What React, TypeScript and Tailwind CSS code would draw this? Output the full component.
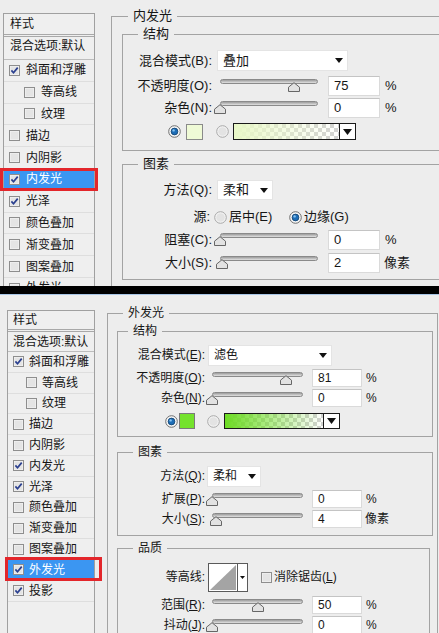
import React from "react";

const font = "font-['Liberation_Sans','Noto_Sans_CJK_SC',sans-serif]";

const layers: [string, boolean][] = [
  ["斜面和浮雕", false],
  ["等高线", true],
  ["纹理", true],
  ["描边", false],
  ["内阴影", false],
  ["内发光", false],
  ["光泽", false],
  ["颜色叠加", false],
  ["渐变叠加", false],
  ["图案叠加", false],
  ["外发光", false],
  ["投影", false],
];

function CheckBox({ checked }: { checked?: boolean }) {
  return (
    <svg width="11" height="11" viewBox="0 0 11 11" className="shrink-0">
      <rect x="0.5" y="0.5" width="10" height="10" fill="#f6f6f6" stroke="#8e8e8e" />
      <rect x="1.5" y="1.5" width="8" height="8" fill="#e4e4e4" />
      {checked && (
        <path d="M2.4 5.4 4.5 7.8 8.7 2.6" fill="none" stroke="#2a3f8f" strokeWidth="1.7" />
      )}
    </svg>
  );
}

function Radio({ on }: { on?: boolean }) {
  return (
    <svg width="13" height="13" viewBox="0 0 13 13" className="shrink-0">
      <circle cx="6.5" cy="6.5" r="5.8" fill="#f4f4f4" stroke={on ? "#707070" : "#a8a8a8"} />
      <circle cx="6.5" cy="6.5" r="4.3" fill={on ? "#ffffff" : "#e3e3e3"} />
      {on && (
        <>
          <circle cx="6.5" cy="6.5" r="3.4" fill="#1d6db6" stroke="#0f3d69" strokeWidth="0.8" />
          <circle cx="5.6" cy="5.4" r="1.2" fill="#86c4f2" />
        </>
      )}
    </svg>
  );
}

function Tri() {
  return (
    <svg width="8" height="5" viewBox="0 0 8 5" className="shrink-0">
      <path d="M0 0H8L4 5Z" fill="#111" />
    </svg>
  );
}

function Thumb() {
  return (
    <svg width="12" height="10" viewBox="0 0 12 10">
      <path d="M0.5 9.5V5.2L6 0.7L11.5 5.2V9.5Z" fill="#e2e2e2" stroke="#666" />
    </svg>
  );
}

function Slider({ cls, w, p }: { cls: string; w: number; p: number }) {
  return (
    <div className={`relative h-full shrink-0 ${cls}`}>
      <div className="absolute left-0 right-0 top-[3px] h-[5px] rounded-full border border-[#8a8a8a] bg-gradient-to-b from-[#9c9c9c] to-[#e2e2e2]" />
      <div className="absolute top-[6px] flex" style={{ left: p * w - 6 }}>
        <Thumb />
      </div>
    </div>
  );
}

function Field({ v, cls }: { v: string; cls: string }) {
  return (
    <div className={`flex h-full shrink-0 items-center border border-[#dadada] border-t-[#c4c4c4] bg-white pl-[5px] ${cls}`}>
      {v}
    </div>
  );
}

function Select({ v, cls }: { v: string; cls: string }) {
  return (
    <div className={`flex h-full shrink-0 items-center justify-between border border-[#e4e4e4] bg-white pl-[5px] pr-[4px] ${cls}`}>
      <span>{v}</span>
      <Tri />
    </div>
  );
}

function GradientBox({ id, color, cls }: { id: string; color: string; cls: string }) {
  return (
    <div className={`flex h-full shrink-0 border border-[#1a1a1a] ${cls}`}>
      <svg className="h-full flex-1" preserveAspectRatio="none">
        <defs>
          <pattern id={`${id}p`} width="8" height="8" patternUnits="userSpaceOnUse">
            <rect width="8" height="8" fill="#fff" />
            <rect width="4" height="4" fill="#d2d2d2" />
            <rect x="4" y="4" width="4" height="4" fill="#d2d2d2" />
          </pattern>
          <linearGradient id={`${id}g`} x1="0" x2="1" y1="0" y2="0">
            <stop offset="0" stopColor={color} stopOpacity="1" />
            <stop offset="1" stopColor={color} stopOpacity="0" />
          </linearGradient>
        </defs>
        <rect width="100%" height="100%" fill={`url(#${id}p)`} />
        <rect width="100%" height="100%" fill={`url(#${id}g)`} />
      </svg>
      <div className="flex w-[16px] items-center justify-center border-l border-[#1a1a1a] bg-white">
        <svg width="9" height="6" viewBox="0 0 9 6">
          <path d="M0 0H9L4.5 6Z" fill="#111" />
        </svg>
      </div>
    </div>
  );
}

// mnemonic key, e.g. (B):
function Key({ k, u, bare }: { k: string; u?: boolean; bare?: boolean }) {
  return (
    <>
      (<span className={u ? "underline underline-offset-1" : ""}>{k}</span>){bare ? "" : ":"}
    </>
  );
}

function StyleList({ bottom }: { bottom?: boolean }) {
  const checked = bottom
    ? ["斜面和浮雕", "内发光", "光泽", "外发光", "投影"]
    : ["斜面和浮雕", "内发光", "光泽"];
  const selected = bottom ? "外发光" : "内发光";
  // the top shot is cropped just below 外发光
  const rows = bottom ? layers : layers.slice(0, 11);
  return (
    <div
      className={
        bottom
          ? "ml-[7px] mt-[15px] h-[400px] w-[88px] shrink-0 border border-[#a0a0a0] bg-[#efefef] text-[12px] leading-[14px]"
          : "ml-[3px] mt-[13px] h-[300px] w-[92px] shrink-0 border border-[#a0a0a0] bg-[#efefef] text-[12px] leading-[14px]"
      }
    >
      <div
        className={
          bottom
            ? "flex h-[21px] items-center border-b-[3px] border-double border-[#a8a8a8] pl-[5px]"
            : "flex h-[23px] items-center border-b-[3px] border-double border-[#a8a8a8] pl-[6px]"
        }
      >
        样式
      </div>
      <div
        className={
          bottom
            ? "flex h-[20px] items-center border-b border-[#bdbdbd] pl-[5px]"
            : "flex h-[23px] items-center border-b border-[#bdbdbd] pb-[4px] pl-[6px]"
        }
      >
        混合选项:默认
      </div>
      {rows.map(([name, indent]) => {
        const sel = name === selected;
        return (
          <div
            key={name}
            className={`relative flex items-center border-b border-[#dedede] ${
              bottom ? "h-[20.8px] gap-[5px]" : "h-[21.8px] gap-[6px]"
            } ${indent ? (bottom ? "pl-[18px]" : "pl-[20px]") : "pl-[5px]"} ${
              sel ? "bg-[#3b96f2] text-white" : "text-[#151515]"
            }`}
          >
            <CheckBox checked={checked.includes(name)} />
            <span>{name}</span>
            {sel && (
              <span
                className={
                  bottom
                    ? "absolute -bottom-[1px] -left-[3px] -right-[8px] -top-[3px] border-[3px] border-[#e3262b]"
                    : "absolute -bottom-[1px] -left-[4px] -right-[4px] -top-[1px] border-[3px] border-[#e3262b]"
                }
              />
            )}
          </div>
        );
      })}
    </div>
  );
}

function TopShot() {
  return (
    <div className="flex h-[286px] overflow-hidden bg-[#ededed] text-[#161616]">
      <StyleList />
      <fieldset className="ml-[16px] mt-[8px] w-[360px] shrink-0 self-start border border-[#a3a3a3] pb-[20px] text-[13px] leading-[16px]">
        <legend className="ml-[16px] px-[5px]">内发光</legend>
        <fieldset className="ml-[10px] mt-[2px] w-[340px] border border-[#a3a3a3] pb-[10px]">
          <legend className="ml-[15px] px-[5px]">结构</legend>
          <div className="mt-[8px] flex h-[21px] items-center">
            <div className="w-[89px] whitespace-nowrap text-right">
              混合模式<Key k="B" />
            </div>
            <Select v="叠加" cls="ml-[5px] w-[131px]" />
          </div>
          <div className="mt-[5px] flex h-[20px] items-center">
            <div className="w-[89px] whitespace-nowrap text-right">
              不透明度<Key k="O" />
            </div>
            <Slider cls="ml-[8px] w-[98px]" w={98} p={0.75} />
            <Field v="75" cls="ml-[10px] w-[52px]" />
            <span className="ml-[5px]">%</span>
          </div>
          <div className="mt-[2px] flex h-[20px] items-center">
            <div className="w-[89px] whitespace-nowrap text-right">
              杂色<Key k="N" />
            </div>
            <Slider cls="ml-[8px] w-[98px]" w={98} p={0} />
            <Field v="0" cls="ml-[10px] w-[52px]" />
            <span className="ml-[5px]">%</span>
          </div>
          <div className="mt-[5px] flex h-[17px] items-center pl-[45px]">
            <Radio on />
            <div className="ml-[5px] h-[16px] w-[17px] border border-[#8a8a8a] bg-[#effad6]" />
            <div className="ml-[13px] flex">
              <Radio />
            </div>
            <GradientBox id="ga" color="#e9f8c8" cls="ml-[4px] w-[123px]" />
          </div>
        </fieldset>
        <fieldset className="ml-[10px] mt-[5px] w-[340px] border border-[#a3a3a3] pb-[6px]">
          <legend className="ml-[15px] px-[5px]">图素</legend>
          <div className="mt-[8px] flex h-[20px] items-center">
            <div className="w-[89px] whitespace-nowrap text-right">
              方法<Key k="Q" />
            </div>
            <Select v="柔和" cls="ml-[5px] w-[56px]" />
          </div>
          <div className="mt-[7px] flex h-[20px] items-center">
            <div className="w-[87px] whitespace-nowrap text-right">源:</div>
            <div className="ml-[4px] flex w-[75px] items-center gap-[2px]">
              <Radio />
              <span>居中(E)</span>
            </div>
            <div className="flex items-center gap-[2px]">
              <Radio on />
              <span>边缘(G)</span>
            </div>
          </div>
          <div className="mt-[3px] flex h-[20px] items-center">
            <div className="w-[89px] whitespace-nowrap text-right">
              阻塞<Key k="C" />
            </div>
            <Slider cls="ml-[8px] w-[98px]" w={98} p={0} />
            <Field v="0" cls="ml-[10px] w-[52px]" />
            <span className="ml-[5px]">%</span>
          </div>
          <div className="mt-[3px] flex h-[20px] items-center">
            <div className="w-[89px] whitespace-nowrap text-right">
              大小<Key k="S" />
            </div>
            <Slider cls="ml-[8px] w-[98px]" w={98} p={0.02} />
            <Field v="2" cls="ml-[10px] w-[52px]" />
            <span className="ml-[4px]">像素</span>
          </div>
        </fieldset>
      </fieldset>
    </div>
  );
}

function ContourBox() {
  return (
    <svg width="40" height="29" viewBox="0 0 40 29" className="ml-[3px] shrink-0">
      <rect x="0.5" y="0.5" width="39" height="28" fill="#fff" stroke="#5a5a5a" />
      <path d="M2 27 L28 2 V27 Z" fill="#a4a4a4" />
      <line x1="29.5" y1="1" x2="29.5" y2="28" stroke="#5a5a5a" />
      <path d="M32 13H37L34.5 16Z" fill="#111" />
    </svg>
  );
}

function BottomShot() {
  return (
    <div className="flex h-[338px] overflow-hidden bg-[#ededed] text-[#161616]">
      <StyleList bottom />
      <fieldset className="ml-[12px] mt-[11px] w-[331px] shrink-0 self-start border border-[#a3a3a3] pb-[20px] text-[12px] leading-[15px]">
        <legend className="ml-[15px] px-[5px]">外发光</legend>
        <fieldset className="ml-[9px] mt-[3px] w-[316px] border border-[#a3a3a3] pb-[7px]">
          <legend className="ml-[10px] px-[5px]">结构</legend>
          <div className="mt-[6px] flex h-[21px] items-center">
            <div className="w-[87px] whitespace-nowrap text-right">
              混合模式<Key k="E" u />
            </div>
            <Select v="滤色" cls="ml-[3px] w-[124px]" />
          </div>
          <div className="mt-[3px] flex h-[18px] items-center">
            <div className="w-[87px] whitespace-nowrap text-right">
              不透明度<Key k="O" u />
            </div>
            <Slider cls="ml-[7px] w-[91px]" w={91} p={0.81} />
            <Field v="81" cls="ml-[9px] w-[50px]" />
            <span className="ml-[4px]">%</span>
          </div>
          <div className="mt-[2px] flex h-[18px] items-center">
            <div className="w-[87px] whitespace-nowrap text-right">
              杂色<Key k="N" u />
            </div>
            <Slider cls="ml-[7px] w-[91px]" w={91} p={0} />
            <Field v="0" cls="ml-[9px] w-[50px]" />
            <span className="ml-[4px]">%</span>
          </div>
          <div className="mt-[6px] flex h-[16px] items-center pl-[47px]">
            <Radio on />
            <div className="ml-[1px] h-[16px] w-[16px] border border-[#7a7a7a] bg-[#74e22c]" />
            <div className="ml-[12px] flex">
              <Radio />
            </div>
            <GradientBox id="gb" color="#6ddc24" cls="ml-[4px] w-[116px]" />
          </div>
        </fieldset>
        <fieldset className="ml-[9px] mt-[8px] w-[316px] border border-[#a3a3a3] pb-[7px]">
          <legend className="ml-[15px] px-[5px]">图素</legend>
          <div className="mt-[6px] flex h-[21px] items-center">
            <div className="w-[87px] whitespace-nowrap text-right">
              方法<Key k="Q" u />
            </div>
            <Select v="柔和" cls="ml-[2px] w-[54px]" />
          </div>
          <div className="mt-[3px] flex h-[18px] items-center">
            <div className="w-[87px] whitespace-nowrap text-right">
              扩展<Key k="P" u />
            </div>
            <Slider cls="ml-[7px] w-[91px]" w={91} p={0} />
            <Field v="0" cls="ml-[9px] w-[50px]" />
            <span className="ml-[4px]">%</span>
          </div>
          <div className="mt-[2px] flex h-[18px] items-center">
            <div className="w-[87px] whitespace-nowrap text-right">
              大小<Key k="S" u />
            </div>
            <Slider cls="ml-[7px] w-[91px]" w={91} p={0.04} />
            <Field v="4" cls="ml-[9px] w-[50px]" />
            <span className="ml-[3px]">像素</span>
          </div>
        </fieldset>
        <fieldset className="ml-[9px] mt-[5px] w-[313px] border border-[#a3a3a3] pb-[20px]">
          <legend className="ml-[15px] px-[5px]">品质</legend>
          <div className="mt-[7px] flex h-[28px] items-center">
            <div className="w-[87px] whitespace-nowrap text-right">等高线:</div>
            <ContourBox />
            <div className="ml-[13px] flex items-center gap-[2px]">
              <CheckBox />
              <span>
                消除锯齿<Key k="L" u bare />
              </span>
            </div>
          </div>
          <div className="mt-[5px] flex h-[18px] items-center">
            <div className="w-[87px] whitespace-nowrap text-right">
              范围<Key k="R" u />
            </div>
            <Slider cls="ml-[7px] w-[91px]" w={91} p={0.5} />
            <Field v="50" cls="ml-[9px] w-[50px]" />
            <span className="ml-[4px]">%</span>
          </div>
          <div className="mt-[2px] flex h-[18px] items-center">
            <div className="w-[87px] whitespace-nowrap text-right">
              抖动<Key k="J" u />
            </div>
            <Slider cls="ml-[7px] w-[91px]" w={91} p={0} />
            <Field v="0" cls="ml-[9px] w-[50px]" />
            <span className="ml-[4px]">%</span>
          </div>
        </fieldset>
      </fieldset>
    </div>
  );
}

export default function App() {
  return (
    <div className={`flex h-[633px] w-[439px] flex-col overflow-hidden bg-[#ededed] ${font}`}>
      <TopShot />
      <div className="h-[8px] shrink-0 bg-black" />
      <div className="h-[1px] shrink-0 bg-[#a9c6e6]" />
      <BottomShot />
    </div>
  );
}
